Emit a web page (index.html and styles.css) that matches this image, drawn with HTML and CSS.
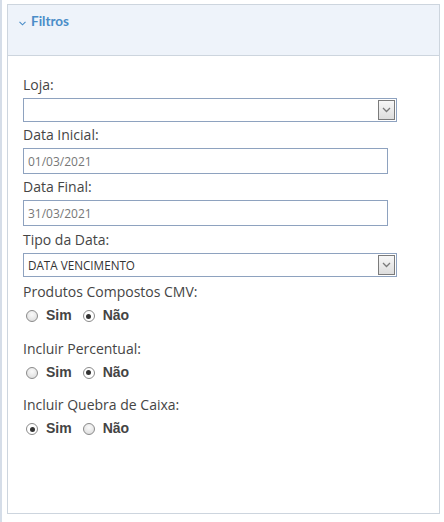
FILE: index.html
```html
<!DOCTYPE html>
<html lang="pt">
<head>
<meta charset="utf-8">
<title>Filtros</title>
<link rel="stylesheet" href="styles.css">
</head>
<body>
<div class="page">
  <div class="strip"></div>
  <section class="panel">
    <header class="panel-head">
      <svg class="head-chev" width="7" height="5" viewBox="0 0 7 5"><polyline points="0.5,0.8 3.5,3.8 6.5,0.8" fill="none" stroke="#4a8dc8" stroke-width="1.1"/></svg>
      <span class="head-title">Filtros</span>
    </header>
    <div class="panel-body">
      <div class="lbl">Loja:</div>
      <div class="select">
        <span class="select-val"></span>
        <span class="select-btn"><svg width="9" height="6" viewBox="0 0 9 6"><polyline points="1,1 4.5,4.5 8,1" fill="none" stroke="#7a7a7a" stroke-width="1.3"/></svg></span>
      </div>

      <div class="lbl">Data Inicial:</div>
      <div class="input">01/03/2021</div>

      <div class="lbl">Data Final:</div>
      <div class="input">31/03/2021</div>

      <div class="lbl lbl-tipo">Tipo da Data:</div>
      <div class="select">
        <span class="select-val">DATA VENCIMENTO</span>
        <span class="select-btn"><svg width="9" height="6" viewBox="0 0 9 6"><polyline points="1,1 4.5,4.5 8,1" fill="none" stroke="#7a7a7a" stroke-width="1.3"/></svg></span>
      </div>

      <div class="group">
        <div class="lbl">Produtos Compostos CMV:</div>
        <div class="radios">
          <span class="radio"></span><span class="rtext">Sim</span>
          <span class="radio checked"></span><span class="rtext">Não</span>
        </div>
      </div>

      <div class="group">
        <div class="lbl">Incluir Percentual:</div>
        <div class="radios">
          <span class="radio"></span><span class="rtext">Sim</span>
          <span class="radio checked"></span><span class="rtext">Não</span>
        </div>
      </div>

      <div class="group">
        <div class="lbl">Incluir Quebra de Caixa:</div>
        <div class="radios">
          <span class="radio checked"></span><span class="rtext">Sim</span>
          <span class="radio"></span><span class="rtext">Não</span>
        </div>
      </div>
    </div>
  </section>
</div>
</body>
</html>
```
FILE: styles.css
```css
html, body {
  margin: 0;
  padding: 0;
  background: #ffffff;
}
body {
  font-family: "Open Sans", "Liberation Sans", sans-serif;
}
.page {
  display: flex;
  height: 522px;
}
.strip {
  flex: none;
  width: 2px;
  background: #d5dde8;
}
.panel {
  flex: none;
  box-sizing: border-box;
  margin: 4px 0 0 5px;
  width: 433px;
  height: 510px;
  border: 1px solid #cdd5de;
  background: #ffffff;
}
.panel-head {
  box-sizing: border-box;
  height: 51px;
  padding: 8px 0 0 11px;
  background: #eef3fa;
  border-bottom: 1px solid #cdd5de;
  display: flex;
  align-items: flex-start;
}
.head-chev {
  display: block;
  margin: 8px 5px 0 0;
}
.head-title {
  font-family: Lato, "Open Sans", sans-serif;
  font-weight: 700;
  font-size: 13.5px;
  line-height: 17px;
  color: #4a8dc8;
}
.panel-body {
  display: flex;
  flex-direction: column;
  align-items: flex-start;
  padding: 16px 0 0 15px;
}
.lbl {
  font-size: 14px;
  line-height: 20px;
  color: #454545;
  margin: 3px 0;
}
.lbl-tipo {
  margin-top: 4px;
}
.select {
  box-sizing: border-box;
  width: 374px;
  height: 24px;
  border: 1px solid #8ea2bf;
  padding: 0 1px 0 4px;
  display: flex;
  align-items: center;
  justify-content: space-between;
  background: #ffffff;
}
.select-val {
  font-size: 11.7px;
  color: #333333;
  white-space: nowrap;
}
.select-btn {
  box-sizing: border-box;
  width: 17px;
  height: 20px;
  border: 1px solid #7b7b7b;
  background: linear-gradient(#f7f7f7, #dddddd);
  display: flex;
  align-items: center;
  justify-content: center;
}
.select-btn svg {
  display: block;
}
.input {
  box-sizing: border-box;
  width: 365px;
  height: 26px;
  border: 1px solid #8ea2bf;
  padding: 0 4px;
  display: flex;
  align-items: center;
  font-size: 12px;
  color: #777777;
}
.group {
  display: flex;
  flex-direction: column;
  align-items: flex-start;
  margin-top: 2px;
}
.radios {
  display: flex;
  align-items: flex-start;
  height: 20px;
  margin: 0 0 8.5px;
  font-family: "Liberation Sans", Arial, sans-serif;
  font-weight: 700;
  font-size: 14px;
  line-height: 20px;
  color: #444444;
}
.radio {
  box-sizing: border-box;
  flex: none;
  width: 12px;
  height: 12px;
  margin: 5px 8px 0 3px;
  border: 1px solid #8a8a8a;
  border-radius: 50%;
  background: radial-gradient(circle at 50% 35%, #fafafa, #d8d8d8);
  display: flex;
  align-items: center;
  justify-content: center;
}
.rtext + .radio {
  margin-left: 11px;
}
.radio.checked {
  background: #ffffff;
}
.radio.checked::after {
  content: "";
  width: 5px;
  height: 5px;
  border-radius: 50%;
  background: #333333;
}
```
